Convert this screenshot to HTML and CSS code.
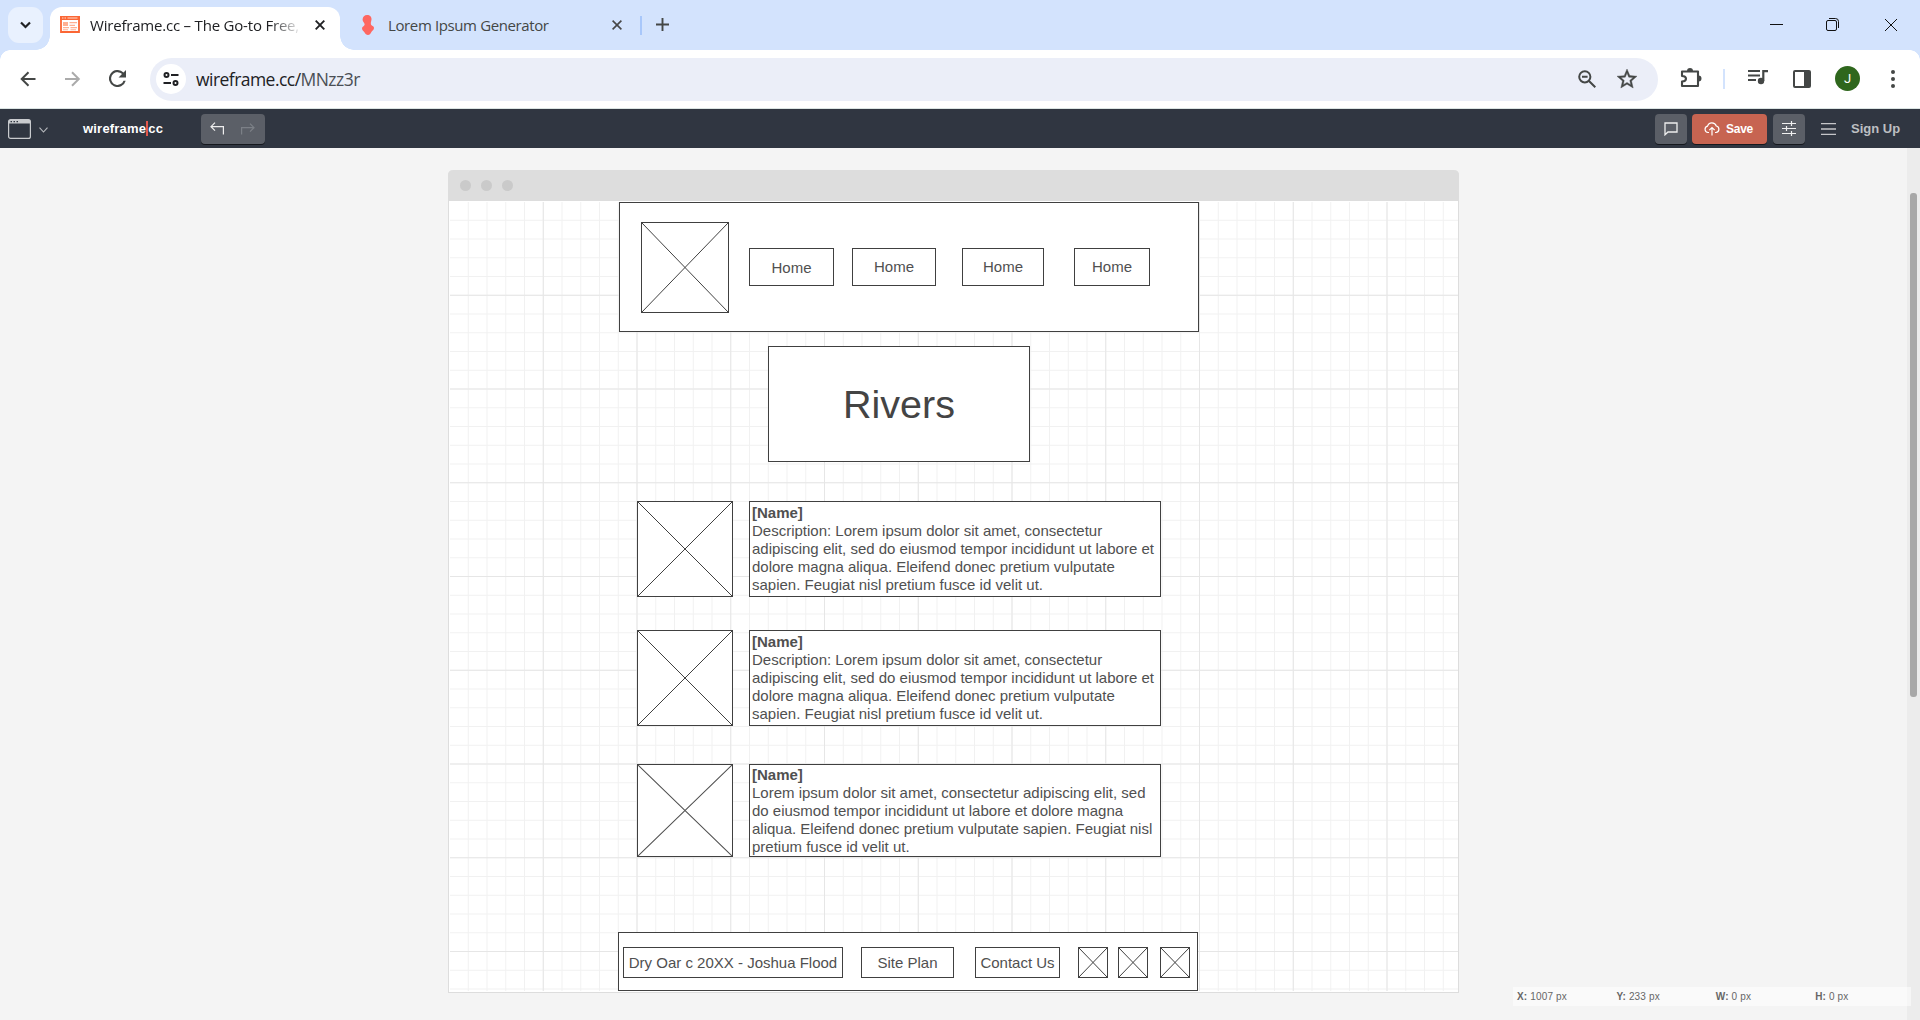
FILE: index.html
```html
<!DOCTYPE html>
<html lang="en">
<head>
<meta charset="utf-8">
<title>Wireframe.cc – The Go-to Free, Online Wireframing Tool</title>
<link rel="stylesheet" href="styles.css">
</head>
<body>
<div class="tabstrip">
  <div class="tab-search"><svg width="11" height="8" viewBox="0 0 11 8"><path d="M1 1.500l4.500 4.500L10 1.500" fill="none" stroke="#202124" stroke-width="2.200"/></svg></div>
  <div class="tab active">
    <svg class="favicon" width="20" height="17" viewBox="0 0 20 17"><path d="M1 1h18v15H1z" fill="#fff" stroke="#fb6634" stroke-width="1.800"/><path d="M0 0h20v4H0z" fill="#fb6634"/><path d="M2 1.500h1.500v1H2zM4.500 1.500H6v1H4.500zM7.500 1.500h10v1h-10z" fill="#ffd9c9"/><path d="M3 6h5v4H3zM9.500 6h7.500v1.300H9.500zM9.500 8.700H15V10H9.500zM3 11h6v1.200H3zM3 13.200h5v1H3zM10.500 11H17v1.200h-6.500zM10.500 13.200H16v1h-5.500z" fill="#ffb092"/></svg>
    <span class="tab-title fade">Wireframe.cc – The Go-to Free,</span>
    <svg class="tab-close" width="10" height="10" viewBox="0 0 10 10"><path d="M.7.7l8.600 8.600M9.300.7L.7 9.300" stroke="#202124" stroke-width="1.900"/></svg>
  </div>
  <div class="tab">
    <svg class="favicon two" width="12" height="20" viewBox="0 0 12 20"><path d="M5 0c3 0 4.800 2 4.500 4.500C9.200 6.500 8.500 8 9 9.500c.4 1.300 3 1.500 3 3.500s-1.800 2.600-2.600 4C8.500 19 7.500 20 6 20s-2.600-1-3.600-2.700C1.300 15.800 0 15.500 0 13.300c0-1.800 2.200-2 2.600-3.600C3 8 .5 7 .6 4.300.8 1.700 2.500 0 5 0z" fill="#fe6761"/></svg>
    <span class="tab-title second">Lorem Ipsum Generator</span>
    <svg class="tab-close" width="10" height="10" viewBox="0 0 10 10"><path d="M.6.6l8.800 8.800M9.400.6L.6 9.400" stroke="#474747" stroke-width="1.600"/></svg>
  </div>
  <i class="tab-divider"></i>
  <svg class="new-tab" width="13" height="13" viewBox="0 0 13 13"><path d="M6.500 0v13M0 6.500h13" stroke="#444746" stroke-width="1.900"/></svg>
  <svg class="window-controls" width="128" height="16" viewBox="0 0 128 16" fill="none" stroke="#111" stroke-width="1"><path d="M0 7.500h13M115 2l12 12M127 2l-12 12"/><rect x="56.500" y="3.500" width="10" height="10" rx="1.500"/><path d="M59 1.500h6.500q3 0 3 3V11"/></svg>
</div>
<div class="toolbar">
  <svg class="nav-back" width="16" height="16" viewBox="0 0 16 16" fill="none" stroke="#444746" stroke-width="2"><path d="M15.500 8H2M8.500 1.200L1.700 8l6.800 6.800"/></svg>
  <svg class="nav-forward" width="16" height="16" viewBox="0 0 16 16" fill="none" stroke="#ababab" stroke-width="2"><path d="M0 8H13.500M7 1.200L13.800 8 7 14.800"/></svg>
  <svg class="nav-reload" width="17" height="17" viewBox="0 0 16 16"><path d="M13.650 2.350A8 8 0 1 0 15.730 10h-2.080A6 6 0 1 1 8 2c1.660 0 3.140.69 4.220 1.780L9 7h7V0z" fill="#444746"/></svg>
  <div class="omnibox">
    <div class="site-info"><svg width="16" height="14" viewBox="0 0 16 14" fill="none" stroke="#202124" stroke-width="2"><circle cx="3.500" cy="3" r="2"/><path d="M8 3h7.500M.5 11H8"/><circle cx="12.500" cy="11" r="2"/></svg></div>
    <span class="url">wireframe.cc/<em>MNzz3r</em></span>
    <svg class="zoom-out" width="18" height="18" viewBox="0 0 18 18" fill="none" stroke="#444746" stroke-width="2"><circle cx="6.800" cy="6.800" r="5.600"/><path d="M11 11l6.300 6.300M4 6.800h5.600"/></svg>
    <svg class="star" width="24" height="24" viewBox="0 0 24 24"><path d="M22 9.240l-7.190-.62L12 2 9.190 8.630 2 9.240l5.460 4.730L5.820 21 12 17.270 18.180 21l-1.630-7.030L22 9.240zM12 15.400l-3.760 2.270 1-4.280-3.320-2.880 4.380-.38L12 6.100l1.710 4.040 4.380.38-3.320 2.880 1 4.280L12 15.400z" fill="#444746" stroke="#444746" stroke-width=".4"/></svg>
  </div>
  <svg class="puzzle" width="22" height="22" viewBox="0 0 22 22"><path d="M2 4.500h16v14.500H2v-4.500q4-.2 4-2.800T2 9z" fill="none" stroke="#444746" stroke-width="2.100" stroke-linejoin="round"/><path d="M7 4a3 3 0 0 1 6 0zM18.500 8.500a3 3 0 0 1 0 6z" fill="#444746"/></svg>
  <i class="toolbar-divider"></i>
  <svg class="queue" width="20" height="16" viewBox="0 0 20 16"><path d="M0 1h12v2H0zM0 5.500h12v2H0zM0 10h8v2H0z" fill="#444746"/><circle cx="13" cy="12" r="3.200" fill="#444746"/><path d="M14.200 1H20v2.200h-3.600V12h-2.200z" fill="#444746"/></svg>
  <svg class="side-panel" width="18" height="18" viewBox="0 0 18 18"><rect x="1" y="1" width="16" height="16" rx="1" fill="none" stroke="#444746" stroke-width="2"/><path d="M11 1h6v16h-6z" fill="#444746"/></svg>
  <div class="avatar">J</div>
  <svg class="kebab" width="4" height="18" viewBox="0 0 4 18" fill="#444746"><circle cx="2" cy="2" r="2"/><circle cx="2" cy="9" r="2"/><circle cx="2" cy="16" r="2"/></svg>
</div>
<div class="appbar">
  <svg class="device" width="23" height="20" viewBox="0 0 23 20"><rect x=".6" y=".6" width="21.800" height="18.800" rx="2" fill="none" stroke="#c9cbce" stroke-width="1.200"/><path d="M1 1h21v3.500H1z" fill="#c9cbce"/><path d="M2.500 2h1.500v1.300H2.500zM5.500 2H7v1.300H5.500zM8.500 2H10v1.300H8.500z" fill="#303641"/></svg>
  <svg class="device-caret" width="9" height="6" viewBox="0 0 9 6"><path d="M.5.7l4 4.300 4-4.300" fill="none" stroke="#b9bbbf" stroke-width="1.100"/></svg>
  <span class="logo">wireframe<i></i>cc</span>
  <div class="history">
    <svg width="15" height="13" viewBox="0 0 15 13" fill="none" stroke="#eee" stroke-width="1.200"><path d="M5 .7L1 4.700l4 4M1 4.700h12.400V12.500"/></svg>
    <svg width="15" height="13" viewBox="0 0 15 13" fill="none" stroke="#7c8087" stroke-width="1.200"><path d="M9 1.700l4 4-4 4M13 5.700H.6V12.500"/></svg>
  </div>
  <div class="btn comment"><svg width="14" height="14" viewBox="0 0 14 14"><path d="M1 1h12v9H4l-3 2.800z" fill="none" stroke="#eee" stroke-width="1.300"/></svg></div>
  <div class="btn save"><svg width="16" height="14" viewBox="0 0 16 14" fill="none" stroke="#fff" stroke-width="1.200"><path d="M5 10.500H4A3.200 3.200 0 0 1 3.500 4.200 4.600 4.600 0 0 1 12.300 4a3.300 3.300 0 0 1-.3 6.500h-1M8 13.500V5.500M5.300 8.200L8 5.500l2.700 2.700"/></svg><span>Save</span></div>
  <div class="btn settings"><svg width="14" height="15" viewBox="0 0 14 15" fill="none" stroke="#f0f0f0" stroke-width="1.200"><path d="M0 2.500h14M0 7.500h14M0 12.500h14M9.500 0v5M4.500 5v5M9.500 10v5"/></svg></div>
  <svg class="burger" width="15" height="12" viewBox="0 0 15 12"><path d="M0 .7h15M0 6h15M0 11.300h15" stroke="#c5c6c9" stroke-width="1.300"/></svg>
  <span class="signup">Sign Up</span>
</div>
<main class="workspace">
  <div class="canvas">
    <div class="canvas-title"><i></i><i></i><i></i></div>
    <div class="page">
      <svg class="grid" width="1008" height="789">
        <defs>
          <pattern id="minor" width="18.750" height="18.750" patternUnits="userSpaceOnUse"><path d="M18.250 0v18.750M0 18.250h18.750" fill="none" stroke="#f1f1f1"/></pattern>
          <pattern id="major" width="93.750" height="93.750" patternUnits="userSpaceOnUse"><path d="M93.250 0v93.750M0 93.250h93.750" fill="none" stroke="#e6e6e6"/></pattern>
        </defs>
        <rect width="1008" height="789" fill="url(#minor)"/>
        <rect width="1008" height="789" fill="url(#major)"/>
      </svg>
      <div class="box site-header">
        <svg class="pic logo-pic" preserveAspectRatio="none" viewBox="0 0 100 100"><path d="M0 0l100 100M100 0L0 100"/></svg>
        <div class="box link l1">Home</div>
        <div class="box link l2">Home</div>
        <div class="box link l3">Home</div>
        <div class="box link l4">Home</div>
      </div>
      <div class="box hero">Rivers</div>
      <div class="row">
        <svg class="pic" preserveAspectRatio="none" viewBox="0 0 100 100"><path d="M0 0l100 100M100 0L0 100"/></svg>
        <div class="box copy"><b>[Name]</b><br>Description: Lorem ipsum dolor sit amet, consectetur<br>adipiscing elit, sed do eiusmod tempor incididunt ut labore et<br>dolore magna aliqua. Eleifend donec pretium vulputate<br>sapien. Feugiat nisl pretium fusce id velit ut.</div>
      </div>
      <div class="row second-row">
        <svg class="pic" preserveAspectRatio="none" viewBox="0 0 100 100"><path d="M0 0l100 100M100 0L0 100"/></svg>
        <div class="box copy"><b>[Name]</b><br>Description: Lorem ipsum dolor sit amet, consectetur<br>adipiscing elit, sed do eiusmod tempor incididunt ut labore et<br>dolore magna aliqua. Eleifend donec pretium vulputate<br>sapien. Feugiat nisl pretium fusce id velit ut.</div>
      </div>
      <div class="row third-row">
        <svg class="pic" preserveAspectRatio="none" viewBox="0 0 100 100"><path d="M0 0l100 100M100 0L0 100"/></svg>
        <div class="box copy"><b>[Name]</b><br>Lorem ipsum dolor sit amet, consectetur adipiscing elit, sed<br>do eiusmod tempor incididunt ut labore et dolore magna<br>aliqua. Eleifend donec pretium vulputate sapien. Feugiat nisl<br>pretium fusce id velit ut.</div>
      </div>
      <div class="box site-footer">
        <div class="box credit">Dry Oar c 20XX - Joshua Flood</div>
        <div class="box plan">Site Plan</div>
        <div class="box contact">Contact Us</div>
        <svg class="pic social s1" preserveAspectRatio="none" viewBox="0 0 100 100"><path d="M0 0l100 100M100 0L0 100"/></svg>
        <svg class="pic social s2" preserveAspectRatio="none" viewBox="0 0 100 100"><path d="M0 0l100 100M100 0L0 100"/></svg>
        <svg class="pic social s3" preserveAspectRatio="none" viewBox="0 0 100 100"><path d="M0 0l100 100M100 0L0 100"/></svg>
      </div>
    </div>
  </div>
  <div class="scrollbar"><i></i></div>
  <div class="status"><span><b>X:</b> 1007 px</span><span><b>Y:</b> 233 px</span><span><b>W:</b> 0 px</span><span><b>H:</b> 0 px</span></div>
</main>
</body>
</html>
```
FILE: styles.css
```css
* { box-sizing: border-box; }
body { margin: 0; width: 1920px; height: 1020px; overflow: hidden; font-family: "Liberation Sans", Arial, sans-serif; background: #f4f4f4; }
svg { display: block; flex: none; }
i { flex: none; }

/* Browser tab strip */
.tabstrip { display: flex; height: 50px; background: #d3e3fd; font-family: "Open Sans", "Noto Sans", sans-serif; font-size: 15px; }
.tab-search { display: flex; align-items: center; justify-content: center; width: 35px; height: 36px; margin: 7px 0 0 8px; border-radius: 11px; background: #e9f1fe; }
.tab { position: relative; display: flex; align-items: center; width: 290px; height: 36px; margin-top: 7px; color: #444746; }
.tab.active { height: 43px; margin-left: 7px; padding-bottom: 7px; border-radius: 12px 12px 0 0; background: #fff; color: #202124; }
.tab.active::before, .tab.active::after { content: ""; position: absolute; bottom: 0; width: 14px; height: 14px; }
.tab.active::before { left: -14px; background: radial-gradient(circle at 0 0, transparent 13.500px, #fff 14px); }
.tab.active::after { right: -14px; background: radial-gradient(circle at 100% 0, transparent 13.500px, #fff 14px); }
.favicon { margin: -1px 0 0 10px; }
.favicon.two { margin-left: 22px; }
.tab-title { width: 210px; margin-left: 10px; white-space: nowrap; overflow: hidden; letter-spacing: -.2px; }
.tab-title.second { width: 214px; margin-left: 14px; letter-spacing: -.38px; }
.fade { -webkit-mask-image: linear-gradient(to right, #000 180px, transparent 212px); mask-image: linear-gradient(to right, #000 180px, transparent 212px); }
.tab-close { margin-left: 15px; }
.tab:not(.active) .tab-close { margin-left: 10px; }
.tab-divider { width: 2px; height: 19px; margin: 16px 0 0 10px; background: #a8c7fa; }
.new-tab { margin: 18px 0 0 14px; }
.window-controls { margin: 17px 22px 0 auto; }

/* Address bar */
.toolbar { display: flex; align-items: center; height: 59px; padding-bottom: 1px; border-bottom: 1px solid #dbe4e3; background: radial-gradient(circle at 10px 10px, #fff 9.500px, #d3e3fd 10px) 0 0 / 10px 10px no-repeat, radial-gradient(circle at 0 10px, #fff 9.500px, #d3e3fd 10px) 100% 0 / 10px 10px no-repeat, #fff; }
.nav-back { margin-left: 20px; }
.nav-forward { margin-left: 29px; }
.nav-reload { margin-left: 28px; }
.omnibox { display: flex; align-items: center; width: 1508px; height: 43px; margin: 1px 0 0 24px; border-radius: 22px; background: #ebeef8; }
.site-info { display: flex; align-items: center; justify-content: center; width: 30px; height: 30px; margin-left: 6px; border-radius: 50%; background: #fff; }
.url { width: 1381px; margin-left: 10px; font: 17.500px "Open Sans", "Noto Sans", sans-serif; letter-spacing: -.54px; color: #202124; }
.url em { font-style: normal; color: #4a4e55; }
.zoom-out { margin-left: 1px; }
.star { margin-left: 19px; }
.puzzle { margin: -2px 0 0 22px; }
.toolbar-divider { width: 2px; height: 20px; margin-left: 21px; background: #d3e3fd; }
.queue { margin: -3px 0 0 23px; }
.side-panel { margin-left: 25px; }
.avatar { width: 25px; height: 25px; margin-left: 24px; border-radius: 50%; background: #2f671d; color: #fff; font: 13px/25px Roboto, sans-serif; text-align: center; }
.kebab { margin-left: 31px; }

/* Wireframe app bar */
.appbar { display: flex; align-items: center; height: 39px; background: #303641; color: #fff; font-size: 13px; font-weight: bold; }
.device { margin: 0 0 0 8px; }
.device-caret { margin: 2px 0 0 8px; }
.logo { display: flex; width: 118px; margin-left: 35px; font-size: 13px; letter-spacing: .2px; }
.logo i { width: 2px; height: 15px; background: #e2574c; }
.history, .btn { display: flex; align-items: center; justify-content: center; height: 30px; border-radius: 4px; background: #5b5f67; box-shadow: 0 1px 0 #15181d; }
.history { width: 64px; gap: 16px; }
.comment { width: 32px; margin-left: auto; }
.save { width: 75px; margin-left: 5px; padding-right: 2px; gap: 6px; background: #c76451; font-size: 12px; letter-spacing: -.25px; }
.settings { width: 32px; margin-left: 6px; }
.burger { margin-left: 16px; }
.signup { width: 69px; margin-left: 15px; color: #bdbfc2; font-size: 13px; }

/* Drawing area */
.workspace { position: relative; height: 872px; padding: 22px 0 0 448px; }
.canvas { width: 1011px; height: 823px; border: 1px solid #ddd; border-top: 0; border-radius: 5px 5px 0 0; background: #fff; }
.canvas-title { display: flex; gap: 10px; height: 31px; padding: 10px 0 0 12px; margin: 0 -1px; border-radius: 5px 5px 0 0; background: #ddd; }
.canvas-title i { width: 11px; height: 11px; border-radius: 50%; background: #cacaca; }
.page { position: relative; height: 790px; margin: 1px 0 0 1px; display: flex; flex-direction: column; align-items: flex-start; color: #505050; font-size: 15px; line-height: 18px; }
.grid { position: absolute; inset: 0; }
.box { position: relative; border: 1px solid #404040; background: #fff; white-space: nowrap; flex: none; }
.pic { position: relative; border: 1px solid #404040; background: #fff; fill: none; stroke: #404040; }
.pic path { vector-effect: non-scaling-stroke; }
.site-header { display: flex; width: 580px; height: 130px; margin-left: 169px; padding: 19px 0 0 21px; }
.logo-pic { width: 88px; height: 91px; }
.link { height: 38px; margin-top: 26px; text-align: center; line-height: 35px; }
.l1 { width: 85px; margin-left: 20px; line-height: 37px; }
.l2 { width: 84px; margin-left: 18px; }
.l3 { width: 82px; margin-left: 26px; }
.l4 { width: 76px; margin-left: 30px; }
.hero { width: 262px; height: 116px; margin: 14px 0 0 318px; color: #444; font-size: 39.500px; line-height: 114px; text-align: center; }
.row { display: flex; gap: 16px; height: 96px; margin: 39px 0 0 187px; }
.row .pic { width: 96px; height: 100%; }
.copy { width: 412px; padding: 2px 0 0 2px; }
.second-row { margin-top: 33px; }
.third-row { height: 93px; margin-top: 38px; }
.third-row .pic { stroke: #505050; }
.third-row .copy { padding-top: 1px; }
.site-footer { display: flex; width: 580px; height: 59px; margin: 75px 0 0 168px; padding: 14px 0 0 4px; }
.site-footer .box { height: 31px; line-height: 30px; text-align: center; }
.credit { width: 220px; }
.plan { width: 93px; margin-left: 18px; }
.contact { width: 85px; margin-left: 21px; }
.social { width: 30px; height: 31px; }
.s1 { margin-left: 18px; }
.s2 { margin-left: 10px; }
.s3 { margin-left: 12px; }

.scrollbar { position: absolute; top: 0; right: 0; width: 13px; height: 872px; padding: 45px 0 0 3px; background: #ececec; }
.scrollbar i { display: block; width: 7px; height: 504px; border-radius: 3px; background: #a8a8a8; }
.status { position: absolute; left: 1513px; top: 839px; display: grid; grid-template-columns: repeat(4, 99.400px); width: 398px; height: 19px; padding-left: 4px; background: rgba(255,255,255,.5); color: #666; font-size: 10px; line-height: 19px; letter-spacing: .15px; }
```
